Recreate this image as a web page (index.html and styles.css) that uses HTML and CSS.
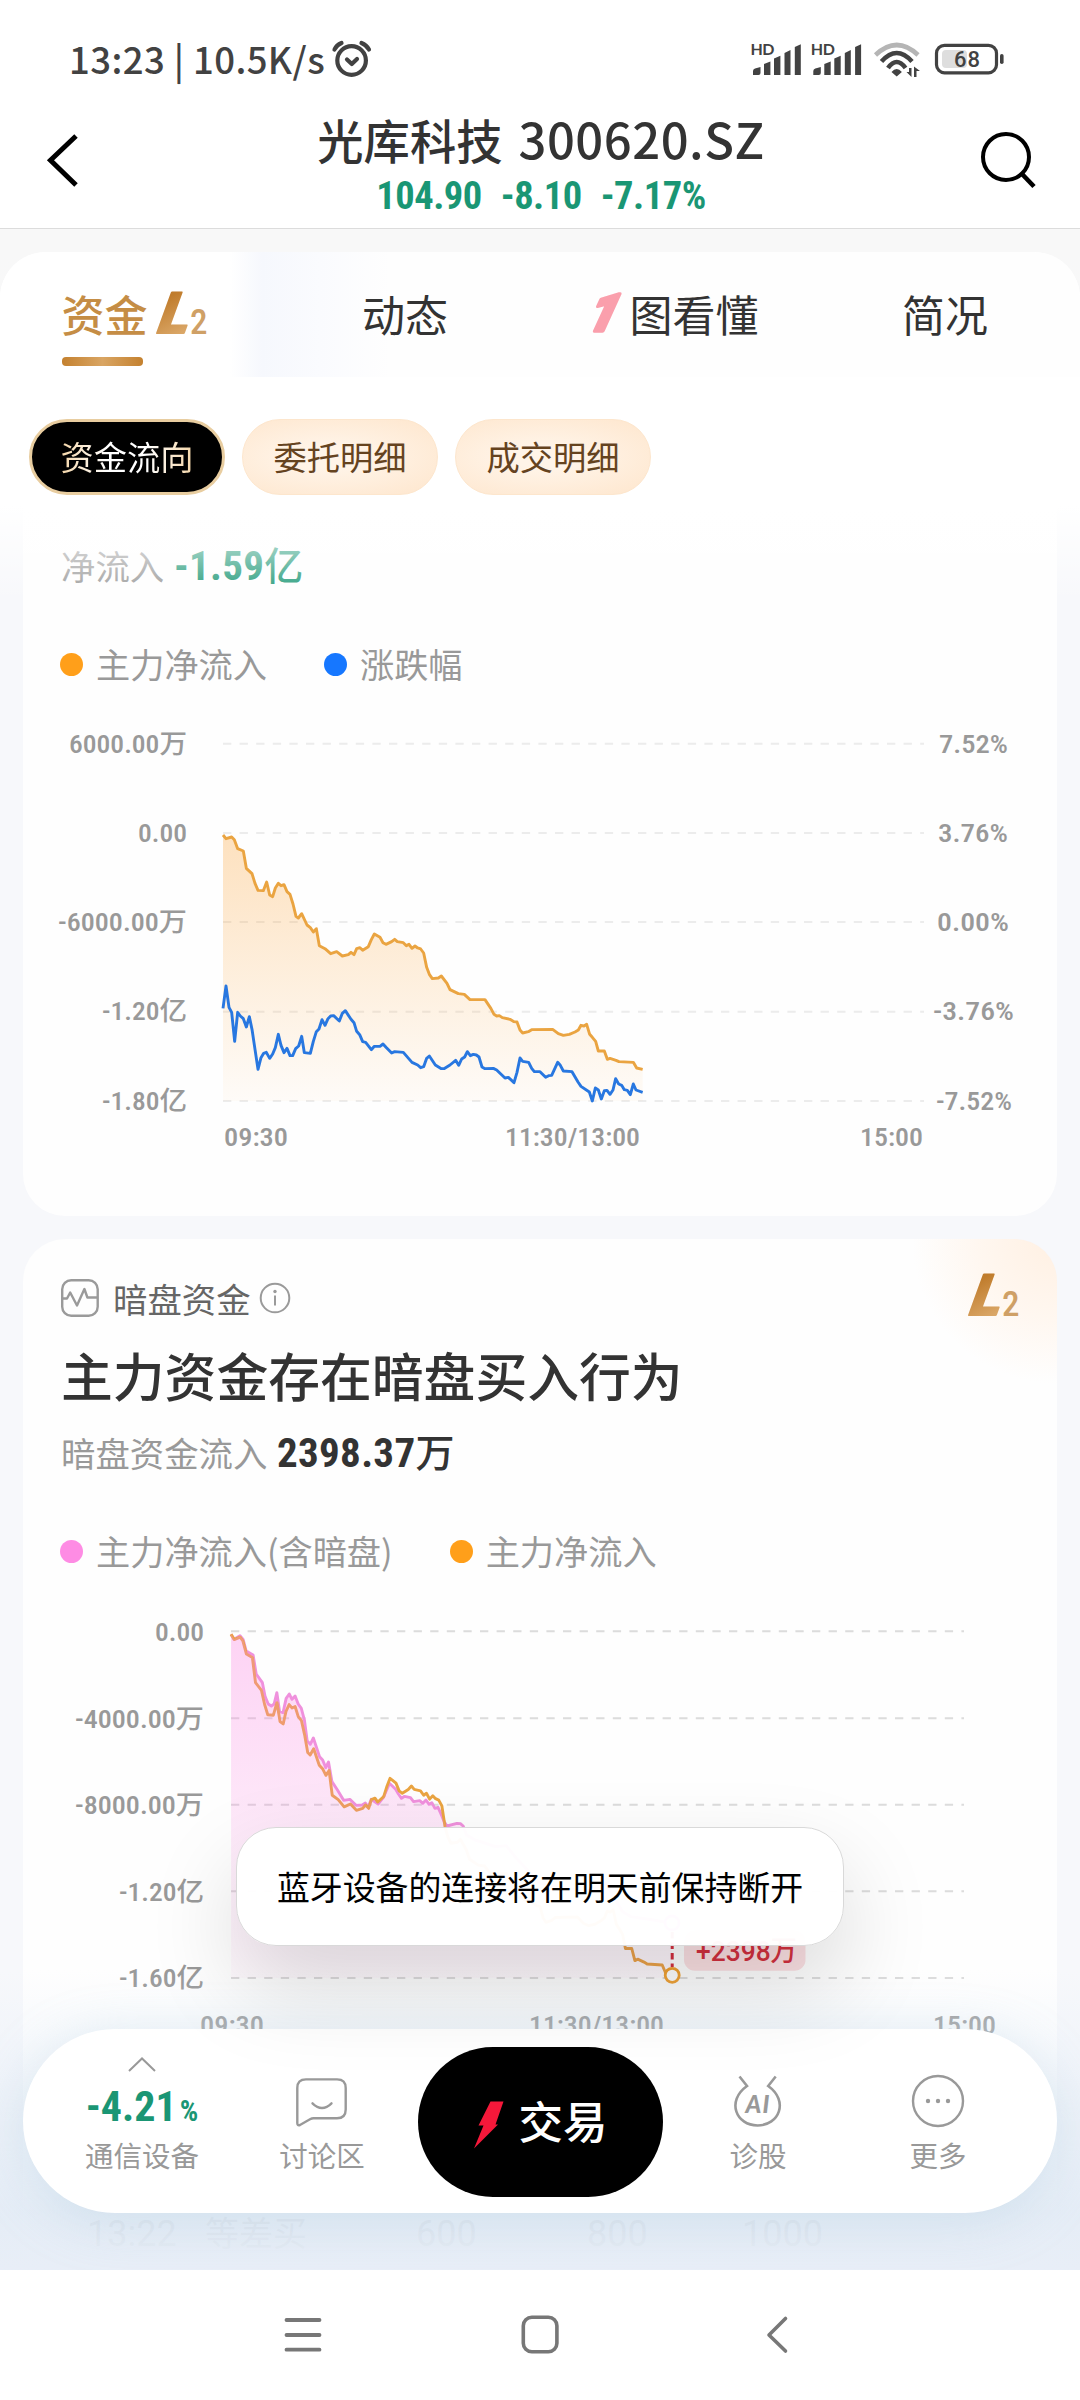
FILE: index.html
```html
<!DOCTYPE html>
<html lang="zh-CN">
<head>
    <meta charset="UTF-8">
    <meta name="viewport" content="width=device-width, initial-scale=1.0">
    <title>光库科技 300620.SZ</title>
    <link rel="stylesheet" href="styles.css">
</head>
<body>
    <div class="screen">
        <div class="status-bar">
            <span class="status-time">13:23 | 10.5K/s</span>
            <svg class="alarm" width="42" height="40" viewBox="331 40 42 40" fill="none" stroke="#424242" stroke-width="4.2" stroke-linecap="round">
                <circle cx="351.6" cy="60.5" r="14.3"/>
                <path d="M334.5 49.5Q336.5 45 341.5 43M361.5 43Q366.5 45 369 49.5"/>
                <path d="M347 59.5l4.8 4.5 5.2-5" stroke-linejoin="round"/>
            </svg>
            <svg class="status-icons" width="260" height="44" viewBox="748 38 260 44">
                <g id="signal" fill="#424242">
                    <text x="750.5" y="55" font-size="16" font-weight="700" font-family="Lato" textLength="24">HD</text>
                    <path d="M753 75v-4q0-2 2-2.500l5.500-1.500v6q0 2-2 2zM764 75V64l6.400-2.500V75zM774 75V58.500l6.400-2.800V75zM784.500 75V53l6-3V75zM794.800 75V47l6-2.700V75z"/>
                </g>
                <use href="#signal" x="60.300"/>
                <g fill="none" stroke="#424242" stroke-width="4.600">
                    <path d="M875.500 55Q896.700 35 918 55" stroke="#b5b5b5"/>
                    <path d="M881.500 61.500Q896.700 44.500 912 61.500"/>
                    <path d="M888 68Q896.700 56 905.500 68"/>
                </g>
                <path d="M891.500 72q5.200-6 10.400 0l-5.200 4.500zM909 68h2.500v9l-5-5H909zM914 77h2.500v-6h3.500l-6-4.500z" fill="#424242"/>
                <rect x="942" y="50" width="25" height="18" rx="4" fill="#dedede"/>
                <rect x="936.500" y="45.300" width="60" height="27.500" rx="8" fill="none" stroke="#424242" stroke-width="3.200"/>
                <rect x="1000" y="54" width="3.600" height="10" rx="1.800" fill="#424242"/>
                <text x="954" y="67.300" font-size="22" font-weight="500" font-family="Roboto" fill="#424242" textLength="26">68</text>
            </svg>
        </div>

        <div class="title-bar">
            <svg class="back" width="36" height="52" viewBox="45 134 36 52" fill="none" stroke="#000" stroke-width="5">
                <path d="M76 136L50.500 160.300 76 185"/>
            </svg>
            <div class="stock">
                <div class="stock-name">光库科技<span>300620.SZ</span></div>
                <div class="stock-price"><span>104.90</span><span>-8.10</span><span>-7.17%</span></div>
            </div>
            <svg class="search" width="58" height="60" viewBox="979 130 58 60" fill="none" stroke="#000" stroke-width="4">
                <circle cx="1006" cy="157" r="23"/>
                <path d="M1022 174l12 12.500" stroke-width="4.600"/>
            </svg>
        </div>

        <div class="content">
            <div class="tab-panel">
                <div class="tabs">
                    <div class="tab active">
                        资金
                        <svg class="l2" width="54" height="46" viewBox="0 0 54 46">
                            <defs>
                                <linearGradient id="gold" x1="0" y1="0" x2="0.300" y2="1">
                                    <stop offset="0.250" stop-color="#c07c2c"/>
                                    <stop offset="1" stop-color="#dba869"/>
                                </linearGradient>
                            </defs>
                            <text class="l2-l" transform="translate(-1 43) skewX(-20)" fill="url(#gold)" stroke="url(#gold)">L</text>
                            <text class="l2-2" x="35" y="44" fill="#cfa066">2</text>
                        </svg>
                    </div>
                    <div class="tab">动态</div>
                    <div class="tab">
                        <svg class="one-mark" width="42" height="44" viewBox="0 0 42 44">
                            <text class="one" transform="translate(-3 40) skewX(-16)">1</text>
                        </svg>图看懂
                    </div>
                    <div class="tab">简况</div>
                </div>
                <div class="pills">
                    <div class="pill selected"><span>资金流向</span></div>
                    <div class="pill">委托明细</div>
                    <div class="pill">成交明细</div>
                </div>
            </div>

            <div class="card card-flow">
                <div class="amount green">净流入 <b>-1.59<i>亿</i></b></div>
                <div class="legend">
                    <span class="dot orange"></span><span class="legend-text">主力净流入</span>
                    <span class="dot blue"></span><span class="legend-text">涨跌幅</span>
                </div>
                <svg class="chart" width="1034" height="500" viewBox="23 716 1034 500">
                    <defs>
                        <linearGradient id="orangeFill" x1="0" y1="0" x2="0" y2="1">
                            <stop offset="0" stop-color="#fb9d2b" stop-opacity="0.300"/>
                            <stop offset="1" stop-color="#fb9d2b" stop-opacity="0.030"/>
                        </linearGradient>
                    </defs>
                    <path class="grid" d="M223 743.700H924M223 833H924M223 922H924M223 1011.700H924M223 1101H924"/>
                    <g transform="translate(200 800) scale(0.33333)">
                        <path fill="url(#orangeFill)" d="M69 105L78 116 95 111 103 119 113 146 130 153 139 205 156 221 165 250 174 271 190 272 200 246 209 285 218 290 226 264 235 250 243 257 252 254 261 275 270 283 279 312 288 349 295 354 305 341 321 375 331 383 340 396 349 386 358 437 375 446 392 461 410 455 427 468 445 464 453 457 462 464 470 446 480 443 488 451 505 440 514 419 523 402 540 412 549 428 558 433 575 425 584 418 592 425 610 428 619 437 627 433 636 445 645 438 653 444 662 447 671 459 680 502 688 523 697 536 715 534 724 528 741 550 750 569 775 581 793 583 810 599 855 599 873 626 882 643 890 648 898 647 907 653 930 658 942 665 951 666 960 690 968 699 985 695 995 689 1058 688 1075 701 1090 706 1108 703 1125 696 1135 690 1143 676 1152 678 1160 673 1169 703 1177 712 1187 724 1195 753 1213 753 1222 778 1230 775 1248 781 1257 785 1300 787 1310 804 1328 808V903H69Z"/>
                        <polyline id="flowLine" class="line flow" points="69,105 78,116 95,111 103,119 113,146 130,153 139,205 156,221 165,250 174,271 190,272 200,246 209,285 218,290 226,264 235,250 243,257 252,254 261,275 270,283 279,312 288,349 295,354 305,341 321,375 331,383 340,396 349,386 358,437 375,446 392,461 410,455 427,468 445,464 453,457 462,464 470,446 480,443 488,451 505,440 514,419 523,402 540,412 549,428 558,433 575,425 584,418 592,425 610,428 619,437 627,433 636,445 645,438 653,444 662,447 671,459 680,502 688,523 697,536 715,534 724,528 741,550 750,569 775,581 793,583 810,599 855,599 873,626 882,643 890,648 898,647 907,653 930,658 942,665 951,666 960,690 968,699 985,695 995,689 1058,688 1075,701 1090,706 1108,703 1125,696 1135,690 1143,676 1152,678 1160,673 1169,703 1177,712 1187,724 1195,753 1213,753 1222,778 1230,775 1248,781 1257,785 1300,787 1310,804 1328,808"/>
                        <polyline class="line change" points="69,625 78,558 87,622 95,637 104,724 113,637 121,648 130,656 139,681 148,650 156,688 174,808 183,773 191,760 199,757 209,775 218,762 226,743 235,703 243,736 252,758 261,745 270,767 278,767 287,746 296,738 305,709 313,758 331,760 340,724 349,695 357,687 366,659 375,676 384,656 392,648 401,647 418,663 427,640 436,632 453,658 462,668 470,694 479,704 488,725 497,727 514,749 523,739 540,739 549,732 558,742 575,759 584,755 610,757 636,787 653,795 662,803 671,800 680,775 688,768 706,795 724,806 732,806 750,795 767,781 776,796 785,777 794,771 802,755 811,767 820,763 829,765 837,771 846,801 855,806 880,805 890,810 915,834 925,832 942,848 951,817 960,774 968,784 986,787 995,805 1003,815 1020,815 1037,832 1046,827 1055,826 1073,787 1081,796 1090,813 1116,815 1134,846 1143,859 1168,876 1177,903 1186,864 1195,870 1204,897 1213,872 1221,871 1230,883 1239,870 1247,836 1256,852 1265,856 1273,869 1282,871 1291,884 1300,852 1308,870 1328,877"/>
                    </g>
                    <g class="axis">
                        <text x="69" y="752.500" textLength="118" lengthAdjust="spacingAndGlyphs">6000.00万</text>
                        <text x="138" y="841.700" textLength="49" lengthAdjust="spacingAndGlyphs">0.00</text>
                        <text x="58" y="930.700" textLength="129" lengthAdjust="spacingAndGlyphs">-6000.00万</text>
                        <text x="102" y="1020.300" textLength="85" lengthAdjust="spacingAndGlyphs">-1.20亿</text>
                        <text x="102" y="1109.700" textLength="85" lengthAdjust="spacingAndGlyphs">-1.80亿</text>
                        <text x="939" y="752.500" textLength="69" lengthAdjust="spacingAndGlyphs">7.52%</text>
                        <text x="938" y="841.700" textLength="70" lengthAdjust="spacingAndGlyphs">3.76%</text>
                        <text x="937" y="930.700" textLength="72" lengthAdjust="spacingAndGlyphs">0.00%</text>
                        <text x="933" y="1020.300" textLength="81" lengthAdjust="spacingAndGlyphs">-3.76%</text>
                        <text x="936" y="1109.700" textLength="76" lengthAdjust="spacingAndGlyphs">-7.52%</text>
                        <text x="224" y="1145.700" textLength="64" lengthAdjust="spacingAndGlyphs">09:30</text>
                        <text x="505" y="1145.700" textLength="135" lengthAdjust="spacingAndGlyphs">11:30/13:00</text>
                        <text x="860" y="1145.700" textLength="63" lengthAdjust="spacingAndGlyphs">15:00</text>
                    </g>
                </svg>
            </div>

            <div class="card card-dark">
                <div class="card-head">
                    <svg width="40" height="40" viewBox="60 1279 40 40" fill="none" stroke="#9a9a9a" stroke-width="2.400">
                        <rect x="62.200" y="1281.200" width="35.500" height="35.500" rx="9"/>
                        <path d="M63 1299.500h4l3.200-6 6.800 13 7.400-16.500 3 8.500H97" stroke-linejoin="round"/>
                    </svg>
                    <span class="card-label">暗盘资金</span>
                    <svg width="32" height="32" viewBox="0 0 32 32" fill="none" stroke="#9a9a9a" stroke-width="2">
                        <circle cx="16" cy="16" r="14.300"/>
                        <path d="M16 13.500v10"/>
                        <circle cx="16" cy="9.500" r="1.700" fill="#9a9a9a" stroke="none"/>
                    </svg>
                    <svg class="l2 card-l2" width="54" height="46" viewBox="0 0 54 46">
                        <text class="l2-l" transform="translate(-1 43) skewX(-20)" fill="url(#gold)" stroke="url(#gold)">L</text>
                        <text class="l2-2" x="35" y="44" fill="#cfa066">2</text>
                    </svg>
                </div>
                <div class="headline">主力资金存在暗盘买入行为</div>
                <div class="amount">暗盘资金流入 <b>2398.37<i>万</i></b></div>
                <div class="legend">
                    <span class="dot pink"></span><span class="legend-text">主力净流入(含暗盘)</span>
                    <span class="dot orange"></span><span class="legend-text">主力净流入</span>
                </div>
                <svg class="chart" width="1034" height="444" viewBox="23 1604 1034 444">
                    <defs>
                        <linearGradient id="pinkFill" x1="0" y1="0" x2="0" y2="1">
                            <stop offset="0" stop-color="#fb86e2" stop-opacity="0.360"/>
                            <stop offset="1" stop-color="#fb86e2" stop-opacity="0.040"/>
                        </linearGradient>
                    </defs>
                    <path class="grid dark" d="M231 1631.300H964M231 1718.300H964M231 1804.700H964M231 1891.300H964M231 1978H964"/>
                    <polyline class="line pink-line" transform="translate(0 1500) scale(0.34435 0.33333)" points="671,403 680,418 697,407 706,418 715,453 735,465 744,522 762,548 770,590 779,612 788,618 796,612 804,578 812,635 822,638 831,595 840,582 848,598 857,588 866,612 875,625 884,660 892,722 901,733 910,714 928,770 937,780 946,803 954,786 964,845 980,870 998,901 1016,898 1034,916 1052,915 1061,909 1069,922 1078,898 1098,912 1113,893 1131,850 1149,868 1157,882 1166,895 1175,889 1192,893 1201,905 1219,902 1228,910 1237,900 1246,913 1254,908 1263,925 1272,922 1280,940 1290,965 1298,978 1327,970 1337,971 1345,978 1355,1005 1380,1020 1440,1040 1470,1037 1500,1075 1568,1150 1620,1160 1700,1175 1760,1150 1808,1235 1833,1250 1898,1260 1951,1270"/>
                    <use href="#flowLine" transform="translate(206.830 1583.300) scale(0.350300 0.485)"/>
                    <path fill="url(#pinkFill)" transform="translate(0 1500) scale(0.34435 0.33333)" d="M671 403L680 418 697 407 706 418 715 453 735 465 744 522 762 548 770 590 779 612 788 618 796 612 804 578 812 635 822 638 831 595 840 582 848 598 857 588 866 612 875 625 884 660 892 722 901 733 910 714 928 770 937 780 946 803 954 786 964 845 980 870 998 901 1016 898 1034 916 1052 915 1061 909 1069 922 1078 898 1098 912 1113 893 1131 850 1149 868 1157 882 1166 895 1175 889 1192 893 1201 905 1219 902 1228 910 1237 900 1246 913 1254 908 1263 925 1272 922 1280 940 1290 965 1298 978 1327 970 1337 971 1345 978 1355 1005 1380 1020 1440 1040 1470 1037 1500 1075 1568 1150 1620 1160 1700 1175 1760 1150 1808 1235 1833 1250 1898 1260 1951 1270V1434H671Z"/>
                    <circle cx="672" cy="1923" r="7" fill="#fff" stroke="#fe8ce4" stroke-width="2.800"/>
                    <path d="M672.200 1932v35" stroke="#d3303f" stroke-width="3" stroke-dasharray="6.500 4"/>
                    <circle cx="672.200" cy="1975.300" r="7" fill="#fff" stroke="#f0a030" stroke-width="2.800"/>
                    <rect x="684" y="1930" width="121.500" height="40.700" rx="11" fill="#fbe0e3"/>
                    <text class="gain" x="696" y="1961" textLength="101" lengthAdjust="spacingAndGlyphs">+2398万</text>
                    <g class="axis">
                        <text x="155" y="1640.500" textLength="49" lengthAdjust="spacingAndGlyphs">0.00</text>
                        <text x="75" y="1727.500" textLength="129" lengthAdjust="spacingAndGlyphs">-4000.00万</text>
                        <text x="75" y="1814" textLength="129" lengthAdjust="spacingAndGlyphs">-8000.00万</text>
                        <text x="119" y="1900.500" textLength="85" lengthAdjust="spacingAndGlyphs">-1.20亿</text>
                        <text x="119" y="1987" textLength="85" lengthAdjust="spacingAndGlyphs">-1.60亿</text>
                        <text x="200" y="2033.500" textLength="64" lengthAdjust="spacingAndGlyphs">09:30</text>
                        <text x="529" y="2033.500" textLength="135" lengthAdjust="spacingAndGlyphs">11:30/13:00</text>
                        <text x="933" y="2033.500" textLength="63" lengthAdjust="spacingAndGlyphs">15:00</text>
                    </g>
                </svg>
                <div class="trade-row">
                    <span>13:22</span><span class="kind">等差买</span><span>600</span><span>800</span><span>1000</span>
                </div>
            </div>

            <div class="top-fade"></div>
            <div class="bottom-fade"></div>

            <div class="dock">
                <div class="dock-item sector">
                    <svg width="28" height="15" viewBox="0 0 28 15" fill="none" stroke="#999" stroke-width="2">
                        <path d="M1 14L14 1.500 27 14"/>
                    </svg>
                    <div class="sector-change">-4.21<small>%</small></div>
                    <span>通信设备</span>
                </div>
                <div class="dock-item">
                    <svg width="54" height="52" viewBox="295 2075 54 52" fill="none" stroke="#999" stroke-width="2.400">
                        <path d="M306 2078.400H337Q345.700 2078.400 345.700 2087V2108.500Q345.700 2117.300 337 2117.300H313.500Q311.800 2117.300 310 2118.300L300 2124Q297.300 2125 297.300 2122V2087Q297.300 2078.400 306 2078.400Z"/>
                        <path d="M312.500 2102.300q9.500 9.500 19 0" stroke-linecap="round"/>
                    </svg>
                    <span>讨论区</span>
                </div>
                <div class="trade-button">
                    <svg width="32" height="48" viewBox="0 0 32 48"><path fill="#f5183a" d="M17.500 0.500H30.500L22.500 23.500H25L1 47.500 10.500 24.500H5.500Z"/></svg>
                    <span>交易</span>
                </div>
                <div class="dock-item">
                    <svg width="54" height="54" viewBox="731 2074 54 54" fill="none" stroke="#999" stroke-width="2.600">
                        <path d="M739.500 2076.500l7.500 9.500c-21 15-11 39.500 10.600 39.500s31.600-24.500 10.600-39.500l7.500-9.500"/>
                        <text x="745.500" y="2113" textLength="24" font-family="Lato" font-size="24" font-weight="900" font-style="italic" fill="#999" stroke="none">AI</text>
                    </svg>
                    <span>诊股</span>
                </div>
                <div class="dock-item">
                    <svg width="54" height="54" viewBox="0 0 54 54">
                        <circle cx="27" cy="27" r="25" fill="none" stroke="#999" stroke-width="2.400"/>
                        <g fill="#999"><circle cx="17" cy="27" r="2.200"/><circle cx="27" cy="27" r="2.200"/><circle cx="37" cy="27" r="2.200"/></g>
                    </svg>
                    <span>更多</span>
                </div>
            </div>

            <div class="toast">蓝牙设备的连接将在明天前保持断开</div>
        </div>

        <div class="nav-bar">
            <svg width="40" height="44" viewBox="0 0 40 44" stroke="#777" stroke-width="3.800" stroke-linecap="round"><path d="M3.500 7H36.500M3.500 22H36.500M3.500 36.700H36.500"/></svg>
            <svg width="40" height="44" viewBox="0 0 40 44" fill="none" stroke="#777" stroke-width="3.600"><rect x="3.300" y="4.300" width="33.600" height="34.500" rx="8.500"/></svg>
            <svg width="40" height="44" viewBox="0 0 40 44" fill="none" stroke="#777" stroke-width="3.600" stroke-linecap="round" stroke-linejoin="round"><path d="M28.500 5.500L12 22 28.500 38"/></svg>
        </div>
    </div>
</body>
</html>
```

FILE: styles.css
```css
* {
    box-sizing: border-box;
}

body {
    margin: 0;
    font-family: "Noto Sans CJK SC", sans-serif;
    color: #333;
}

svg {
    display: block;
    flex: none;
    overflow: visible;
}

.screen {
    width: 1080px;
    height: 2400px;
    display: flex;
    flex-direction: column;
    overflow: hidden;
    background: #fff;
}

/* status bar */
.status-bar {
    height: 110px;
    padding: 10px 72px 0 69px;
    display: flex;
    align-items: center;
    flex: none;
}

.status-time {
    font-size: 36.5px;
    font-weight: 500;
    line-height: 50px;
    margin-top: -2px;
    letter-spacing: 0.4px;
    color: #424242;
    white-space: nowrap;
    width: 262px;
}

.status-icons {
    margin-left: auto;
}

/* header */
.title-bar {
    height: 119px;
    flex: none;
    display: flex;
    justify-content: space-between;
    padding: 0 43px 0 45px;
    border-bottom: 1px solid #dcdcdc;
}

.back {
    margin-top: 24px;
    margin-right: 22px;
}

.search {
    margin-top: 20px;
}

.stock {
    display: flex;
    flex-direction: column;
    align-items: center;
}

.stock-name {
    height: 63px;
    line-height: 56px;
    font-size: 46.3px;
    font-weight: 500;
    white-space: nowrap;
}

.stock-name span {
    font-size: 49px;
    margin-left: 16px;
    letter-spacing: 0.5px;
}

.stock-price {
    display: flex;
    gap: 19px;
    height: 46px;
    line-height: 46px;
    font-family: Roboto, sans-serif;
    font-stretch: 85%;
    font-size: 38.5px;
    letter-spacing: -0.5px;
    font-weight: 700;
    color: #1a9674;
}

/* content */
.content {
    position: relative;
    flex: 1;
    min-height: 0;
    overflow: hidden;
    display: flex;
    flex-direction: column;
    background: linear-gradient(#f8f8f8 23px, #f7f8fb 300px);
    padding-top: 23px;
}

.tab-panel {
    height: 254px;
    flex: none;
    background: #fff;
    border-radius: 46px 46px 0 0;
    overflow: hidden;
}

.tabs {
    display: flex;
    height: 125px;
    background: linear-gradient(90deg, #fff 230px, #f6f8fd 262px, #fafbfe 320px, #fefefe 390px);
}

.tab {
    width: 270px;
    display: flex;
    justify-content: center;
    align-items: center;
    font-size: 43px;
    line-height: 60px;
    padding-bottom: 4px;
}

.tab.active {
    position: relative;
    font-weight: 500;
    color: #c58d45;
    gap: 7px;
}

.tab.active::after {
    content: "";
    position: absolute;
    left: 62px;
    top: 105px;
    width: 81px;
    height: 9px;
    border-radius: 4px;
    background: linear-gradient(90deg, #c4812f, #d9a563 50%, #c4812f);
}

.l2-l {
    font: 900 57px Roboto, sans-serif;
    stroke-width: 2px;
    stroke-linejoin: round;
}

.l2-2 {
    font: 500 35px Roboto, sans-serif;
    font-stretch: 85%;
}

.one-mark {
    margin-left: -4px;
}

.one {
    font: italic 900 52px Roboto, sans-serif;
    fill: #fa9fac;
    stroke: #fa9fac;
    stroke-width: 3.5px;
    stroke-linejoin: round;
}

.pills {
    display: flex;
    gap: 17px;
    padding: 42px 29px 0;
}

.pill {
    width: 196px;
    height: 76px;
    border-radius: 38px;
    line-height: 72px;
    text-align: center;
    font-size: 33.3px;
    color: #65431f;
    background: radial-gradient(ellipse at 45% 50%, #fff4e8 20%, #fee6cd 100%);
    border: 1px solid #fde6cd;
}

.pill.selected {
    background: #000;
    border: 3px solid #e8cda0;
    line-height: 68px;
}

.pill.selected span {
    background: linear-gradient(90deg, #f5d6a8, #fff 35%, #fff 65%, #f5d6a8);
    -webkit-background-clip: text;
    background-clip: text;
    color: transparent;
}

/* cards */
.card {
    width: 1034px;
    margin: 0 auto;
    background: #fefefe;
    flex: none;
}

.card-flow {
    height: 710px;
    border-radius: 0 0 42px 42px;
    padding-top: 32px;
}

.card-dark {
    margin-top: 23px;
    height: 1031px;
    padding-top: 34px;
    border-radius: 42px 42px 0 0;
    background: radial-gradient(ellipse 145px 145px at 100% 0, #fff0e2, #fff7f0 55%, #fefefe 100%) #fefefe;
}

.amount {
    height: 54px;
    line-height: 54px;
    padding-left: 38px;
    font-size: 34.4px;
    color: #999;
    white-space: nowrap;
}

.amount b {
    margin-left: 2px;
    font-family: Roboto, "Noto Sans CJK SC", sans-serif;
    font-stretch: 85%;
    font-size: 41px;
    letter-spacing: 0.3px;
    color: #333;
}

.amount i {
    font-style: normal;
    font-weight: 500;
    font-size: 39px;
}

.green b {
    color: #1a9674;
}

.legend {
    display: flex;
    align-items: center;
    height: 50px;
    padding-left: 37px;
}

.card-flow .legend {
    margin-top: 47px;
}

.card-flow .chart {
    margin-top: 27px;
}

.dot {
    width: 23px;
    height: 23px;
    border-radius: 50%;
}

.orange {
    background: #ff9f1a;
}

.blue {
    background: #1677ff;
}

.pink {
    background: #fe8ce4;
}

.legend-text {
    margin: -2px 57px 0 13px;
    font-size: 34.2px;
    line-height: 50px;
    color: #999;
}

.grid {
    stroke: #ececec;
    stroke-width: 2;
    stroke-dasharray: 8.3 8.3;
}

.grid.dark {
    stroke: #dcdcdc;
}

.line {
    fill: none;
    stroke-width: 2.9px;
    stroke-linejoin: round;
    vector-effect: non-scaling-stroke;
}

.flow {
    stroke: #eaa441;
}

.change {
    stroke: #2877e0;
}

.pink-line {
    stroke: #ee92dc;
}

.axis {
    font-family: Roboto, "Noto Sans CJK SC", sans-serif;
    font-size: 26.3px;
    font-weight: 500;
    font-stretch: 85%;
    fill: #999;
}

.gain {
    font-family: Roboto, "Noto Sans CJK SC", sans-serif;
    font-size: 28px;
    font-weight: 500;
    fill: #d3303f;
}

.card-head {
    display: flex;
    align-items: center;
    height: 50px;
    padding: 0 36px 0 37px;
}

.card-label {
    margin: 0 8px 0 13px;
    font-size: 34.4px;
    line-height: 50px;
    color: #666;
}

.card-l2 {
    margin-left: auto;
    margin-bottom: 6px;
}

.headline {
    margin-top: 14px;
    height: 76px;
    line-height: 76px;
    padding-left: 38px;
    font-size: 51.8px;
    font-weight: 500;
}

.card-dark .amount {
    margin-top: 12px;
}

.card-dark .legend {
    margin-top: 47px;
}

.card-dark .chart {
    margin-top: 28px;
}

.trade-row {
    display: flex;
    margin-top: 161px;
    padding-left: 64px;
    font-family: Roboto, "Noto Sans CJK SC", sans-serif;
    font-size: 36px;
    line-height: 50px;
    color: #555;
}

.trade-row span {
    width: 155px;
}

.trade-row .kind {
    margin-left: -37px;
    width: 211px;
    font-size: 34px;
}

.trade-row span:nth-child(3) {
    width: 171px;
}

/* overlays */
.top-fade {
    position: absolute;
    top: 277px;
    left: 0;
    right: 0;
    height: 95px;
    background: linear-gradient(#fff, rgba(255, 255, 255, 0));
}

.bottom-fade {
    position: absolute;
    bottom: 0;
    left: 0;
    right: 0;
    height: 300px;
    background: linear-gradient(rgba(230, 238, 248, 0), rgba(230, 238, 248, 0.3) 25%, rgba(228, 236, 246, 0.94) 80%, #e8eef7);
}

.dock {
    position: absolute;
    left: 23px;
    bottom: 57px;
    width: 1034px;
    height: 184px;
    border-radius: 92px;
    background: #fff;
    box-shadow: 0 8px 50px rgba(170, 200, 220, 0.35);
    display: flex;
    padding: 18px 29px 0;
}

.dock-item {
    width: 180px;
    display: flex;
    flex-direction: column;
    align-items: center;
    justify-content: flex-end;
    height: 127px;
    font-size: 28.5px;
    color: #999;
}

.dock-item svg {
    margin-bottom: 7px;
}

.dock-item span {
    line-height: 40px;
    margin-bottom: -1px;
}

.sector svg {
    margin-bottom: 8px;
}

.sector-change {
    font-family: Roboto, sans-serif;
    font-stretch: 87%;
    font-size: 42px;
    font-weight: 700;
    line-height: 46px;
    margin: 4px 0 1px;
    color: #1a9674;
}

.sector-change small {
    font-size: 29px;
    margin-left: 3px;
}

.trade-button {
    width: 245px;
    height: 150px;
    margin: 0 5px 0 6px;
    border-radius: 75px;
    background: #000;
    color: #fff;
    font-size: 44.5px;
    font-weight: 500;
    line-height: 146px;
    display: flex;
    justify-content: center;
    gap: 13px;
}

.trade-button svg {
    margin-top: 54px;
}

.toast {
    position: absolute;
    left: 236px;
    top: 1598px;
    width: 608px;
    height: 119px;
    border-radius: 40px;
    border: 1px solid #d9d9d9;
    background: rgba(255, 255, 255, 0.97);
    box-shadow: 0 40px 90px rgba(0, 0, 0, 0.15);
    text-align: center;
    font-size: 32.9px;
    line-height: 115px;
    color: #000;
    white-space: nowrap;
}

/* system navigation */
.nav-bar {
    height: 130px;
    flex: none;
    display: flex;
    justify-content: center;
    align-items: center;
    gap: 197px;
}
```
